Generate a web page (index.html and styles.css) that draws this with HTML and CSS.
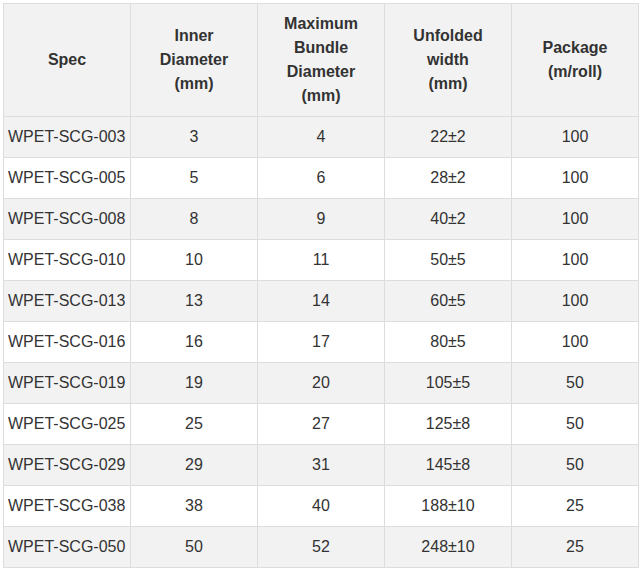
FILE: index.html
```html
<!DOCTYPE html>
<html>
<head>
<meta charset="utf-8">
<link rel="stylesheet" href="styles.css">
</head>
<body>
<table class="spec-table">
  <colgroup>
    <col class="col"><col class="col"><col class="col"><col class="col"><col class="col">
  </colgroup>
  <thead>
    <tr>
      <th>Spec</th>
      <th>Inner<br>Diameter<br>(mm)</th>
      <th>Maximum<br>Bundle<br>Diameter<br>(mm)</th>
      <th>Unfolded<br>width<br>(mm)</th>
      <th>Package<br>(m/roll)</th>
    </tr>
  </thead>
  <tbody>
    <tr><td class="spec">WPET-SCG-003</td><td>3</td><td>4</td><td>22±2</td><td>100</td></tr>
    <tr><td class="spec">WPET-SCG-005</td><td>5</td><td>6</td><td>28±2</td><td>100</td></tr>
    <tr><td class="spec">WPET-SCG-008</td><td>8</td><td>9</td><td>40±2</td><td>100</td></tr>
    <tr><td class="spec">WPET-SCG-010</td><td>10</td><td>11</td><td>50±5</td><td>100</td></tr>
    <tr><td class="spec">WPET-SCG-013</td><td>13</td><td>14</td><td>60±5</td><td>100</td></tr>
    <tr><td class="spec">WPET-SCG-016</td><td>16</td><td>17</td><td>80±5</td><td>100</td></tr>
    <tr><td class="spec">WPET-SCG-019</td><td>19</td><td>20</td><td>105±5</td><td>50</td></tr>
    <tr><td class="spec">WPET-SCG-025</td><td>25</td><td>27</td><td>125±8</td><td>50</td></tr>
    <tr><td class="spec">WPET-SCG-029</td><td>29</td><td>31</td><td>145±8</td><td>50</td></tr>
    <tr><td class="spec">WPET-SCG-038</td><td>38</td><td>40</td><td>188±10</td><td>25</td></tr>
    <tr><td class="spec">WPET-SCG-050</td><td>50</td><td>52</td><td>248±10</td><td>25</td></tr>
  </tbody>
</table>
</body>
</html>
```

FILE: styles.css
```css
html, body {
  background: #ffffff;
}
body {
  margin: 3px;
  font-family: "Liberation Sans", Arial, sans-serif;
  font-size: 16px;
  color: #333333;
}
.spec-table {
  width: 636px;
  table-layout: fixed;
  border-collapse: collapse;
  border: 1px solid #dddddd;
}
.col {
  width: 127px;
}
.spec-table th,
.spec-table td {
  border: 1px solid #dddddd;
  padding: 8px 4px;
  line-height: 24px;
  text-align: center;
  vertical-align: middle;
}
.spec-table th {
  background: #f2f2f2;
  font-weight: bold;
}
.spec-table tbody tr:nth-child(odd) td {
  background: #f2f2f2;
}
.spec-table td.spec {
  text-align: left;
}
```
